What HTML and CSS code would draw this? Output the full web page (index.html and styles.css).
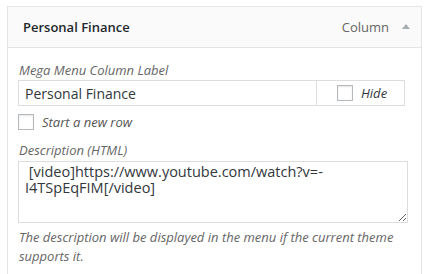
FILE: index.html
```html
<!DOCTYPE html>
<html lang="en">
<head>
    <meta charset="UTF-8">
    <title>Menu Item</title>
    <link rel="stylesheet" href="styles.css">
</head>
<body>
    <div class="menu-item">
        <div class="item-bar">
            <span class="item-title">Personal Finance</span>
            <span class="item-controls">
                <span class="item-type">Column</span>
                <span class="item-arrow"></span>
            </span>
        </div>

        <div class="item-settings">
            <!-- Column label -->
            <div class="field">
                <label class="field-label">Mega Menu Column Label</label>
                <div class="label-row">
                    <input type="text" class="label-input" value="Personal Finance">
                    <span class="hide-box">
                        <span class="check"></span>
                        <span class="check-text">Hide</span>
                    </span>
                </div>
            </div>

            <div class="field row-field">
                <span class="check"></span>
                <span class="check-text">Start a new row</span>
            </div>

            <!-- Description -->
            <div class="field">
                <label class="field-label">Description (HTML)</label>
                <textarea class="desc" rows="3"> [video]https://www.youtube.com/watch?v=-I4TSpEqFIM[/video]</textarea>
                <span class="description">The description will be displayed in the menu if the current theme supports it.</span>
            </div>
        </div>
    </div>
</body>
</html>
```

FILE: styles.css
```css
body {
    margin: 0;
    padding: 0;
    background-color: #ffffff;
    font-family: "Open Sans", sans-serif;
    color: #23282d;
}
.menu-item {
    width: 413px;
    height: 267px;
    margin: 6px 0 0 7px;
    border: 1px solid #e5e5e5;
    border-bottom: none;
    overflow: hidden;
}
.item-bar {
    display: flex;
    justify-content: space-between;
    align-items: center;
    height: 40px;
    padding: 0 11px 0 15px;
    background-color: #fafafa;
    border-bottom: 1px solid #e5e5e5;
}
.item-title {
    font-size: 13px;
    font-weight: 600;
    color: #23282d;
}
.item-controls {
    display: flex;
    align-items: center;
    gap: 13px;
}
.item-type {
    font-size: 13px;
    color: #666666;
}
.item-arrow {
    width: 0;
    height: 0;
    margin-top: -1px;
    border-left: 4px solid transparent;
    border-right: 4px solid transparent;
    border-bottom: 5px solid #a8adb2;
}
.item-settings {
    padding: 13px 12px 0 10px;
}
.field {
    margin: 0;
}
.field-label {
    display: block;
    font-size: 13px;
    font-style: italic;
    color: #666666;
    line-height: 19px;
    padding-left: 1px;
}
.label-row {
    display: flex;
}
.label-input {
    width: 299px;
    height: 26px;
    box-sizing: border-box;
    margin: 0;
    padding: 0 6px;
    border: 1px solid #dddddd;
    font-family: "Open Sans", sans-serif;
    font-size: 14px;
    color: #32373c;
    outline: none;
}
.hide-box {
    display: flex;
    align-items: center;
    gap: 8px;
    width: 88px;
    height: 26px;
    box-sizing: border-box;
    padding-left: 20px;
    border: 1px solid #dddddd;
    border-left: none;
}
.check {
    display: inline-block;
    width: 14px;
    height: 14px;
    border: 1px solid #b4b9be;
    background-color: #ffffff;
    box-shadow: inset 0 1px 2px rgba(0, 0, 0, 0.1);
}
.check-text {
    font-size: 13px;
    font-style: italic;
    line-height: 20px;
    color: #32373c;
}
.row-field {
    display: flex;
    align-items: center;
    gap: 8px;
    margin: 6px 0 9px;
}
.row-field .check-text {
    color: #555555;
}
.desc {
    display: block;
    width: 390px;
    height: 62px;
    box-sizing: border-box;
    margin: 1px 0 0;
    padding: 2px 6px;
    border: 1px solid #dddddd;
    font-family: "Open Sans", sans-serif;
    font-size: 14.5px;
    line-height: 16px;
    color: #32373c;
    resize: vertical;
    outline: none;
}
.description {
    display: block;
    margin-top: 5px;
    font-size: 13px;
    font-style: italic;
    line-height: 19px;
    color: #666666;
    padding-left: 1px;
}
```
